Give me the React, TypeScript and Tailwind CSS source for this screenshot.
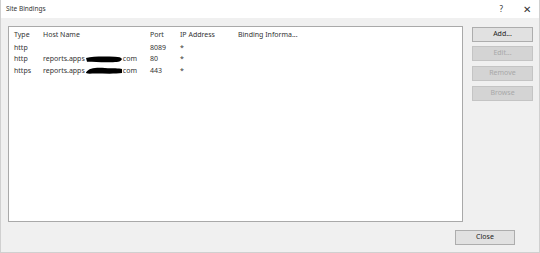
import React from 'react';

interface Binding {
  type: string;
  host: string;
  port: string;
  ip: string;
  info: string;
}

const bindings: Binding[] = [
  { type: 'http', host: '', port: '8089', ip: '*', info: '' },
  { type: 'http', host: 'reports.apps', port: '80', ip: '*', info: '' },
  { type: 'https', host: 'reports.apps', port: '443', ip: '*', info: '' },
];

// black marker scribble over part of the host name
const Redaction: React.FC<{ tilt?: boolean }> = ({ tilt }) => (
  <svg width="38" height="9" viewBox="0 0 38 9" className="shrink-0">
    {tilt ? (
      <path d="M1 6.5 C4 2 10 1.5 20 2 C28 2.5 34 2 37 3 L37 7 C30 8 20 7.5 10 7.5 C6 7.5 3 8 1 7 Z" fill="#000" />
    ) : (
      <path d="M1 3 C8 1.2 20 1.2 30 1.8 C34 2 36 2.5 37 4 C36 6.5 34 7 28 7.2 C20 7.4 10 7.2 2 6.8 Z" fill="#000" />
    )}
  </svg>
);

const Button: React.FC<{ label: string; disabled?: boolean; className?: string }> = ({ label, disabled, className }) => (
  <div
    className={
      'flex h-[15px] items-center justify-center border text-[7px] ' +
      (disabled
        ? 'border-[#c4c4c4] bg-[#d4d4d4] text-[#a8a8a8] '
        : 'border-[#adadad] bg-[#e1e1e1] text-[#222] ') +
      (className ?? '')
    }
  >
    {label}
  </div>
);

const App: React.FC = () => {
  return (
    <div
      className="flex h-[253px] w-[540px] flex-col border-x border-b border-[#d0d0d0] bg-[#f0f0f0] text-[#333] antialiased"
      style={{ fontFamily: '"Noto Sans", "Open Sans", sans-serif' }}
    >
      <div className="flex h-[18px] items-center bg-white pl-[5px] text-[6.5px]">
        <span>Site Bindings</span>
        <span className="ml-auto mr-[20px] text-[8px] text-[#333]">?</span>
        <span className="mr-[8px] text-[10px] leading-none text-[#333]">✕</span>
      </div>

      <div className="flex gap-[9px] pl-[7px] pt-[8px]">
        <div className="h-[196px] w-[455px] border border-[#a9a9a9] bg-white text-[7px]">
          <div className="flex h-[14px] items-end pb-[1px]">
            <span className="w-[34px] pl-[5px]">Type</span>
            <span className="w-[107px]">Host Name</span>
            <span className="w-[30px]">Port</span>
            <span className="w-[58px]">IP Address</span>
            <span>Binding Informa...</span>
          </div>
          <div className="pt-[1px]">
            {bindings.map((b, i) => (
              <div key={i} className="flex h-[11.5px] items-center">
                <span className="w-[34px] pl-[5px]">{b.type}</span>
                <span className="flex w-[107px] items-center">
                  {b.host && (
                    <>
                      <span>{b.host}</span>
                      <Redaction tilt={i === 2} />
                      <span>com</span>
                    </>
                  )}
                </span>
                <span className="w-[30px]">{b.port}</span>
                <span className="w-[58px]">{b.ip}</span>
                <span>{b.info}</span>
              </div>
            ))}
          </div>
        </div>

        <div className="flex w-[61px] flex-col gap-[4px] pt-[1px]">
          <Button label="Add..." />
          <Button label="Edit..." disabled />
          <Button label="Remove" disabled className="mt-[1px]" />
          <Button label="Browse" disabled className="mt-[1px]" />
        </div>
      </div>

      <div className="flex justify-end pr-[24px] pt-[8px]">
        <Button label="Close" className="w-[60px]" />
      </div>
    </div>
  );
};

export default App;
